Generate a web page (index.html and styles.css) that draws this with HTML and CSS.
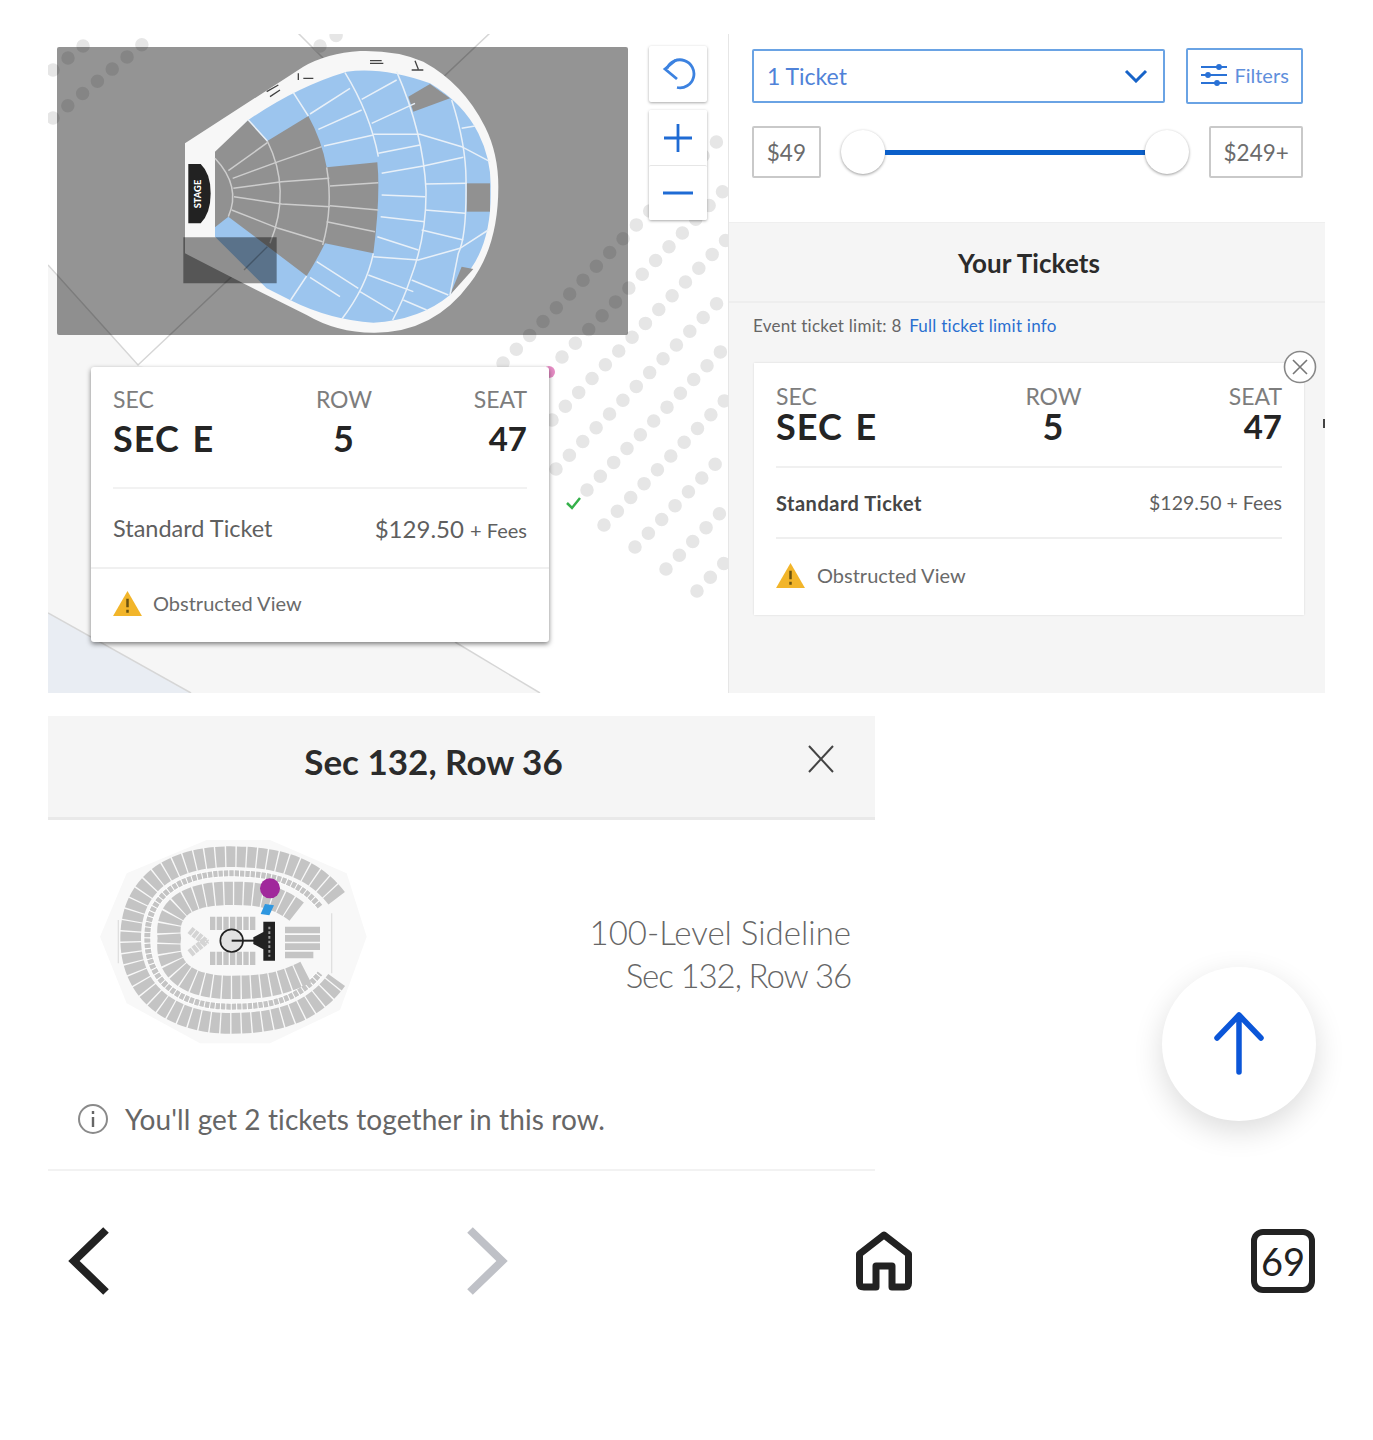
FILE: index.html
```html
<!DOCTYPE html>
<html>
<head>
  <meta charset="UTF-8">
  <title>Tickets</title>
  <link rel="stylesheet" href="styles.css">
</head>
<body>

<div class="page">

  <!-- Bloc 1 : seat map and selected tickets -->
  <div class="top-panel">
    <div class="map-pane">
      <svg class="map-svg" viewBox="48 34 680 660" xmlns="http://www.w3.org/2000/svg">
        <polygon points="48,265 138,365 300,420 455,642 540,693 48,693" fill="#f6f6f6"/>
        <polygon points="48,613 191,693 48,693" fill="#e9edf3"/>
        <g stroke="#d6d6d6" stroke-width="1.5" fill="none">
          <path d="M48 265 L138 365 L490 33"/>
          <path d="M298 33 L345 80"/>
          <path d="M48 613 L191 693"/>
          <path d="M455 642 L540 693"/>
        </g>
        <g stroke="#e6e6e6" stroke-width="13.5" stroke-linecap="round" stroke-dasharray="0 19.2" fill="none">
          <path d="M503 363 L728 130"/>
          <path d="M562 357 L728 186"/>
          <path d="M552 420 L728 238"/>
          <path d="M556 469 L728 292"/>
          <path d="M587 490 L728 344"/>
          <path d="M604 525 L728 397"/>
          <path d="M635 547 L728 451"/>
          <path d="M666 569 L728 505"/>
          <path d="M697 591 L728 559"/>
          <path d="M53 118 L156 33"/>
          <path d="M53 70 L97 35"/>
          <path d="M320 46 L340 33"/>
        </g>
        <circle cx="549" cy="372" r="6" fill="#e58cc4"/>
        <path d="M567 503 L572 508 L580 498" stroke="#35b04a" stroke-width="2.5" fill="none"/>

        <rect x="57" y="47" width="571" height="288" rx="2" fill="#000" fill-opacity=".42"/>

        <!-- venue overview, drawn at 3x -->
        <g transform="translate(170 40) scale(.33333)">
          <path d="M45 310 L400 80 Q470 40 570 33 Q680 30 760 65 Q880 130 945 260 Q985 340 985 440 Q985 620 900 730 Q790 880 610 878 Q500 878 410 825 L230 735 L45 640 Z" fill="#f7f7f7"/>
          <path d="M135 345 L235 240 Q380 140 530 95 Q640 80 780 130 Q880 190 925 280 Q965 360 962 450 Q965 600 900 690 L840 765 Q750 840 610 848 Q480 840 360 780 L290 745 L135 590 Z" fill="#9cc5ee"/>
          <path d="M135 335 L235 240 L292 303 L415 228 Q455 300 470 382 L622 367 Q632 470 610 640 L465 610 Q440 660 410 708 L175 530 L135 562 Z" fill="#919191"/>
          <polygon points="715,170 780,132 840,175 730,215" fill="#919191"/>
          <rect x="890" y="430" width="70" height="85" fill="#919191"/>
          <polygon points="875,680 910,687 840,765" fill="#919191"/>
          <g stroke="#cdcdcd" stroke-width="4.5" fill="none">
            <path d="M135 355 Q215 440 175 530"/>
            <path d="M292 303 Q365 450 300 610"/>
            <path d="M470 382 Q490 500 458 615"/>
            <path d="M175 392 L292 308"/>
            <path d="M188 415 L325 365 L455 320"/>
            <path d="M190 445 L335 425 L478 415"/>
            <path d="M192 470 L335 492 L480 500"/>
            <path d="M185 510 L325 565 L458 605"/>
            <path d="M480 438 L625 428"/>
            <path d="M480 497 L625 510"/>
            <path d="M470 545 L615 575"/>
          </g>
          <g stroke="#e8f0f8" stroke-width="4.5" fill="none">
            <path d="M235 240 L292 303 M370 158 L415 228 M410 708 L362 780"/>
            <path d="M525 98 Q600 220 625 350 M610 640 Q590 740 515 838"/>
            <path d="M680 95 Q760 280 768 450 Q770 590 720 720 Q700 780 668 840"/>
            <path d="M845 180 Q890 320 888 430 Q890 590 865 640 L840 765"/>
            <path d="M420 222 L540 145 M445 268 L575 210 M462 318 L610 285"/>
            <path d="M575 178 L680 120 M605 250 L735 190 M625 340 L750 315"/>
            <path d="M610 283 L750 283 L875 320 L960 365"/>
            <path d="M635 400 L760 378 L880 352"/>
            <path d="M635 465 L765 470 M765 432 L890 430"/>
            <path d="M632 530 L765 545 M765 510 L885 520"/>
            <path d="M622 590 L745 630 M755 570 L880 600"/>
            <path d="M610 650 L745 660 L870 625 L955 570"/>
            <path d="M440 665 L565 745 M595 705 L730 755"/>
            <path d="M420 712 L510 770 M725 720 L835 765 M700 780 L770 810 M570 755 L670 815"/>
            <path d="M875 265 L915 258"/>
          </g>
          <path d="M55 372 H92 Q122 400 122 460 Q122 520 92 550 H55 Z" fill="#222"/>
          <text class="stage-text" transform="translate(92 505) rotate(-90)">STAGE</text>
          <path d="M290 155 L325 135 M300 170 L330 150 M400 115 H430 M385 100 V120 M600 70 H640 M600 62 H635 M725 90 H760 M735 62 L745 88" stroke="#444" stroke-width="4" fill="none"/>
          <path d="M40 592 H320 V730 H40 Z" fill="#000" fill-opacity=".42"/>
          <path d="M292 620 L222 690" stroke="#000" stroke-opacity=".25" stroke-width="4"/>
        </g>
      </svg>

      <div class="map-tools">
        <button class="tool-btn">
          <svg width="36" height="36" viewBox="0 0 36 36"><path d="M7 12.5 A14 14 0 1 1 17 31.5" fill="none" stroke="#3c82e0" stroke-width="2.8"/><path d="M16 4 L5 13 L17 23" fill="none" stroke="#3c82e0" stroke-width="2.8"/></svg>
        </button>
        <div class="zoom-group">
          <button class="tool-btn">
            <svg width="32" height="32" viewBox="0 0 32 32"><path d="M16 2 V30 M2 16 H30" stroke="#1f6bd4" stroke-width="2.8"/></svg>
          </button>
          <button class="tool-btn">
            <svg width="32" height="32" viewBox="0 0 32 32"><path d="M1 16 H31" stroke="#1f6bd4" stroke-width="3"/></svg>
          </button>
        </div>
      </div>

      <div class="seat-popup">
        <div class="popup-top">
          <div class="seat-grid popup-grid">
            <div><span class="seat-label">SEC</span><span class="seat-value">SEC E</span></div>
            <div class="col-center"><span class="seat-label">ROW</span><span class="seat-value">5</span></div>
            <div class="col-right"><span class="seat-label">SEAT</span><span class="seat-value">47</span></div>
          </div>
          <div class="popup-price">
            <span class="ticket-type">Standard Ticket</span>
            <span class="ticket-price">$129.50 <small>+ Fees</small></span>
          </div>
        </div>
        <div class="popup-note">
          <svg class="warn-icon" viewBox="0 0 30 26"><path d="M15 0 L30 26 H0 Z" fill="#f2b52a"/><path d="M15 8 V17 M15 19.5 V22.5" stroke="#6b5310" stroke-width="2.6"/></svg>
          <span>Obstructed View</span>
        </div>
      </div>
    </div>

    <div class="side-pane">
      <div class="filters">
        <div class="filter-row">
          <div class="ticket-select">
            <span>1 Ticket</span>
            <svg width="24" height="14" viewBox="0 0 24 14"><path d="M2 2 L12 12 L22 2" fill="none" stroke="#1763c8" stroke-width="3"/></svg>
          </div>
          <button class="filter-btn">
            <svg width="28" height="28" viewBox="0 0 28 28" stroke="#2a72d6" stroke-width="2.2" fill="#2a72d6"><path d="M1 6 H27 M1 14 H27 M1 22 H27"/><circle cx="19" cy="6" r="1.8"/><circle cx="8" cy="14" r="1.8"/><circle cx="17" cy="22" r="1.8"/></svg>
            <span>Filters</span>
          </button>
        </div>
        <div class="price-row">
          <div class="price-box price-min">$49</div>
          <div class="slider">
            <span class="slider-handle"></span>
            <span class="slider-track"></span>
            <span class="slider-handle"></span>
          </div>
          <div class="price-box price-max">$249+</div>
        </div>
      </div>

      <div class="tickets">
        <h2 class="tickets-title">Your Tickets</h2>
        <p class="limit-note">Event ticket limit: 8 <a class="limit-link">Full ticket limit info</a></p>
        <div class="ticket-card">
          <span class="card-close">
            <svg width="34" height="34" viewBox="0 0 34 34"><circle cx="17" cy="17" r="15.5" fill="#fff" stroke="#888" stroke-width="1.6"/><path d="M10 10 L24 24 M24 10 L10 24" stroke="#777" stroke-width="1.6"/></svg>
          </span>
          <div class="seat-grid card-grid">
            <div><span class="seat-label">SEC</span><span class="seat-value">SEC E</span></div>
            <div class="col-center"><span class="seat-label">ROW</span><span class="seat-value">5</span></div>
            <div class="col-right"><span class="seat-label">SEAT</span><span class="seat-value">47</span></div>
          </div>
          <div class="card-price">
            <span class="card-type">Standard Ticket</span>
            <span class="card-cost">$129.50 + Fees</span>
          </div>
          <div class="card-note">
            <svg class="warn-icon" viewBox="0 0 30 26"><path d="M15 0 L30 26 H0 Z" fill="#f2b52a"/><path d="M15 8 V17 M15 19.5 V22.5" stroke="#6b5310" stroke-width="2.6"/></svg>
            <span>Obstructed View</span>
          </div>
        </div>
        <span class="edge-mark"></span>
      </div>
    </div>
  </div>

  <!-- Bloc 2 : listing detail -->
  <div class="detail-panel">
    <div class="detail-head">
      <h1>Sec 132, Row 36</h1>
      <svg class="detail-close" width="30" height="30" viewBox="0 0 30 30"><path d="M3 2 L27 28 M27 2 L3 28" stroke="#444" stroke-width="2"/></svg>
    </div>
    <div class="detail-body">
      <svg class="stadium" width="290" height="220" viewBox="0 0 870 660">
        <polygon points="30,320 110,130 350,30 540,30 770,130 830,320 750,540 540,640 330,640 110,520" fill="#f8f8f8"/>
        <g fill="none" stroke="#c4c4c4">
          <path d="M740 205 C660 100 540 80 420 80 C260 80 122 150 122 325 C122 500 260 580 420 580 C540 580 660 560 740 450" stroke-width="62" stroke-dasharray="27 4"/>
          <path d="M690 230 C620 145 530 130 420 130 C280 130 170 190 172 325 C170 460 280 530 420 530 C530 530 620 515 690 430" stroke="#fff" stroke-width="22"/>
          <path d="M690 230 C620 145 530 130 420 130 C280 130 170 190 172 325 C170 460 280 530 420 530 C530 530 620 515 690 430" stroke-width="18" stroke-dasharray="13 3"/>
          <path d="M620 245 C550 190 480 190 420 190 C300 190 225 230 238 325 C225 425 300 472 420 472 C490 472 560 472 650 425" stroke-width="70" stroke-dasharray="25 4"/>
          <path d="M360 280 H500 M360 385 H500" stroke-width="40" stroke-dasharray="16 4"/>
          <path d="M300 300 L350 340 M300 370 L350 330" stroke="#d4d4d4" stroke-width="24" stroke-dasharray="12 3"/>
          <path d="M585 300 H690 M585 325 H690 M585 350 H690 M585 375 H670" stroke-width="20"/>
          <path d="M85 270 V400 M725 250 V430" stroke="#e0e0e0" stroke-width="4"/>
        </g>
        <circle cx="425" cy="332" r="34" fill="#e2e2e2" stroke="#222" stroke-width="5"/>
        <path d="M425 332 H500" stroke="#222" stroke-width="6"/>
        <path d="M520 275 H555 V392 H520 V358 L490 342 V322 L520 306 Z" fill="#222"/>
        <path d="M538 290 V380" stroke="#999" stroke-width="6" stroke-dasharray="8 6"/>
        <circle cx="540" cy="175" r="30" fill="#a0289b"/>
        <polygon points="525,222 552,226 538,256 512,252" fill="#2e97e0"/>
      </svg>
      <div class="detail-info">
        <div>100-Level Sideline</div>
        <div class="detail-seat">Sec 132, Row 36</div>
      </div>
    </div>
    <div class="detail-note">
      <svg width="32" height="32" viewBox="0 0 32 32"><circle cx="16" cy="16" r="14" fill="none" stroke="#8a8a8a" stroke-width="2"/><path d="M16 14 V24 M16 8 V11" stroke="#666" stroke-width="2.4"/></svg>
      <span>You'll get 2 tickets together in this row.</span>
    </div>
  </div>

  <button class="scroll-top">
    <svg width="54" height="64" viewBox="0 0 54 64"><path d="M27 3 V60 M5 26 L27 3 L49 26" fill="none" stroke="#0b56d8" stroke-width="5.5" stroke-linecap="round" stroke-linejoin="round"/></svg>
  </button>

  <!-- Bloc 3 : browser bar -->
  <div class="nav-bar">
    <svg width="42" height="68" viewBox="0 0 42 68"><path d="M38 3 L6 34 L38 65" fill="none" stroke="#222" stroke-width="8"/></svg>
    <svg width="42" height="68" viewBox="0 0 42 68"><path d="M4 3 L36 34 L4 65" fill="none" stroke="#bfc1c7" stroke-width="8"/></svg>
    <svg width="56" height="60" viewBox="0 0 56 60"><path d="M3.5 23 L28 4 L52.5 23 V52 Q52.5 56 48 56 H36 V35 H20 V56 H8 Q3.5 56 3.5 52 Z" fill="none" stroke="#222" stroke-width="7" stroke-linejoin="round"/></svg>
    <div class="tab-count">69</div>
  </div>
</div>

</body>
</html>
```

FILE: styles.css
```css
/* --- BASE --- */
* {
  margin: 0;
  padding: 0;
  box-sizing: border-box;
}
html, body {
  background: #fff;
  font-family: 'Lato', 'Liberation Sans', sans-serif;
}
button {
  font-family: inherit;
  background: #fff;
  border: none;
}
.page {
  position: relative;
  width: 1373px;
  height: 1440px;
  padding: 34px 0 0 48px;
}

/* --- TOP PANEL --- */
.top-panel {
  display: flex;
  width: 1277px;
  height: 659px;
}
.map-pane {
  position: relative;
  width: 680px;
  overflow: hidden;
}
.map-svg {
  display: block;
  width: 680px;
  height: 660px;
}
.stage-text {
  font-size: 28px;
  font-weight: 900;
  fill: #fff;
}

/* map buttons */
.map-tools {
  position: absolute;
  left: 601px;
  top: 12px;
  width: 58px;
  display: flex;
  flex-direction: column;
  gap: 8px;
}
.tool-btn {
  display: flex;
  align-items: center;
  justify-content: center;
  width: 58px;
  height: 56px;
  background: #fff;
  border-radius: 2px;
  box-shadow: 0 1px 3px rgba(0,0,0,.35);
}
.zoom-group {
  display: flex;
  flex-direction: column;
  background: #fff;
  border-radius: 2px;
  box-shadow: 0 1px 3px rgba(0,0,0,.35);
}
.zoom-group .tool-btn {
  box-shadow: none;
  height: 55px;
}
.zoom-group .tool-btn + .tool-btn {
  border-top: 1px solid #e6e6e6;
}

/* popup on the map */
.seat-popup {
  position: absolute;
  left: 43px;
  top: 333px;
  width: 458px;
  height: 275px;
  background: #fff;
  border-radius: 3px;
  box-shadow: 0 2px 5px rgba(0,0,0,.5);
}
.popup-top {
  height: 202px;
  padding: 18px 22px 0;
  border-bottom: 2px solid #f0f0f0;
}
.seat-grid {
  display: grid;
}
.popup-grid {
  grid-template-columns: 204px 54px 1fr;
  height: 104px;
  border-bottom: 2px solid #f2f2f2;
}
.card-grid {
  grid-template-columns: 251px 53px 1fr;
  height: 86px;
  border-bottom: 2px solid #f0f0f0;
}
.seat-label,
.seat-value {
  display: block;
  white-space: nowrap;
}
.seat-label {
  font-size: 23px;
  line-height: 28px;
  color: #7d7d7d;
}
.seat-value {
  font-size: 36px;
  font-weight: 700;
  word-spacing: 3px;
  letter-spacing: 1px;
  color: #242424;
}
.col-right .seat-value {
  font-size: 33px;
  letter-spacing: 0;
}
.popup-grid .seat-value {
  line-height: 50px;
}
.card-grid .seat-value {
  line-height: 33px;
}
.col-center {
  text-align: center;
  display: flex;
  flex-direction: column;
  align-items: center;
}
.col-right {
  text-align: right;
}
.popup-price {
  display: flex;
  justify-content: space-between;
  align-items: center;
  height: 78px;
}
.ticket-type {
  font-size: 23.5px;
  color: #5f5f5f;
}
.ticket-price {
  font-size: 24px;
  color: #5f5f5f;
}
.ticket-price small {
  font-size: 20px;
}
.popup-note,
.card-note {
  display: flex;
  align-items: center;
  gap: 11px;
  font-size: 20px;
  color: #6a6a6a;
}
.popup-note {
  padding: 0 22px 3px;
  height: 71px;
}
.warn-icon {
  width: 29px;
  height: 25px;
}

/* --- SIDE PANE --- */
.side-pane {
  width: 597px;
  border-left: 1px solid #e6e6e6;
}
.filters {
  height: 188px;
  padding: 14px 22px 0 23px;
}
.filter-row {
  display: flex;
  gap: 21px;
  align-items: center;
}
.ticket-select {
  display: flex;
  justify-content: space-between;
  align-items: center;
  width: 414px;
  height: 54px;
  padding: 0 15px 0 13px;
  border: 2px solid #6aa3e4;
  border-radius: 2px;
  color: #4f82d8;
  font-size: 23px;
}
.filter-btn {
  display: flex;
  align-items: center;
  justify-content: center;
  gap: 6px;
  width: 117px;
  height: 56px;
  padding-bottom: 2px;
  border: 2px solid #6aa3e4;
  border-radius: 2px;
  color: #5f8fdc;
  font-size: 20px;
}
.price-row {
  display: flex;
  align-items: center;
  margin-top: 22px;
}
.price-box {
  display: flex;
  align-items: center;
  justify-content: center;
  height: 52px;
  border: 2px solid #c9c9c9;
  border-radius: 2px;
  color: #6b6b6b;
  font-size: 22.5px;
}
.price-min {
  width: 69px;
}
.price-max {
  width: 94px;
}
.slider {
  display: flex;
  align-items: center;
  width: 390px;
  padding: 0 20px 0 20px;
}
.slider-handle {
  flex: none;
  width: 44px;
  height: 44px;
  background: #fff;
  border-radius: 50%;
  box-shadow: 0 1px 3px rgba(0,0,0,.4);
}
.slider-track {
  flex: 1;
  height: 5px;
  background: #0b5fc9;
}

/* your tickets */
.tickets {
  position: relative;
  height: 471px;
  padding: 0 20px 0 25px;
  background: #f5f5f5;
}
.tickets-title {
  height: 81px;
  margin: 0 -20px 0 -25px;
  padding-left: 4px;
  border-bottom: 2px solid #eeeeee;
  border-top: 1px solid #efefef;
  text-align: center;
  font-size: 26px;
  font-weight: 700;
  letter-spacing: .1px;
  line-height: 80px;
  color: #2b2b2b;
}
.limit-note {
  padding-top: 13px;
  margin-left: -1px;
  font-size: 17px;
  letter-spacing: .25px;
  line-height: 20px;
  color: #666;
}
.limit-link {
  margin-left: 3px;
  color: #2a6fd0;
}
.ticket-card {
  position: relative;
  width: 550px;
  height: 252px;
  margin-top: 27px;
  padding: 19px 22px 0;
  background: #fff;
  box-shadow: 0 0 2px rgba(0,0,0,.12);
}
.card-close {
  position: absolute;
  right: -13px;
  top: -13px;
  display: block;
}
.card-close svg {
  display: block;
}
.edge-mark {
  position: absolute;
  right: 0;
  top: 197px;
  width: 2px;
  height: 9px;
  background: #444;
}
.card-price {
  display: flex;
  justify-content: space-between;
  align-items: center;
  height: 71px;
  border-bottom: 2px solid #efefef;
}
.card-type {
  font-size: 20px;
  font-weight: 700;
  letter-spacing: .5px;
  color: #454545;
}
.card-cost {
  font-size: 19.5px;
  color: #5f5f5f;
}
.card-note {
  height: 72px;
  gap: 12px;
}

/* --- DETAIL PANEL --- */
.detail-panel {
  width: 827px;
  height: 455px;
  margin-top: 23px;
  border-bottom: 2px solid #f2f2f2;
}
.detail-head {
  position: relative;
  height: 104px;
  padding-right: 56px;
  background: #f5f5f5;
  border-bottom: 3px solid #e9e9e9;
  text-align: center;
}
.detail-head h1 {
  font-size: 35px;
  font-weight: 700;
  line-height: 90px;
  color: #2b2b2b;
}
.detail-close {
  position: absolute;
  left: 758px;
  top: 28px;
}
.detail-body {
  display: flex;
  justify-content: space-between;
  align-items: flex-start;
  height: 277px;
  padding: 10px 24px 0 42px;
}
.stadium {
  flex: none;
}
.detail-info {
  margin-top: 81px;
  text-align: right;
  font-size: 33px;
  font-weight: 300;
  line-height: 43px;
  color: #666;
}
.detail-seat {
  letter-spacing: -1.1px;
}
.detail-note {
  display: flex;
  align-items: center;
  gap: 16px;
  height: 44px;
  padding-left: 29px;
  font-size: 28px;
  letter-spacing: .1px;
  color: #666;
}

/* floating button */
.scroll-top {
  position: absolute;
  left: 1162px;
  top: 967px;
  display: flex;
  align-items: center;
  justify-content: center;
  width: 154px;
  height: 154px;
  border-radius: 50%;
  box-shadow: 0 10px 30px rgba(0,0,0,.14);
}

/* --- BOTTOM BAR --- */
.nav-bar {
  display: grid;
  grid-template-columns: 398px 390px 395px auto;
  align-items: center;
  margin-top: 56px;
  padding-left: 20px;
}
.tab-count {
  display: flex;
  align-items: center;
  justify-content: center;
  width: 64px;
  height: 64px;
  border: 6px solid #222;
  border-radius: 12px;
  font-size: 38px;
  color: #222;
}
```
